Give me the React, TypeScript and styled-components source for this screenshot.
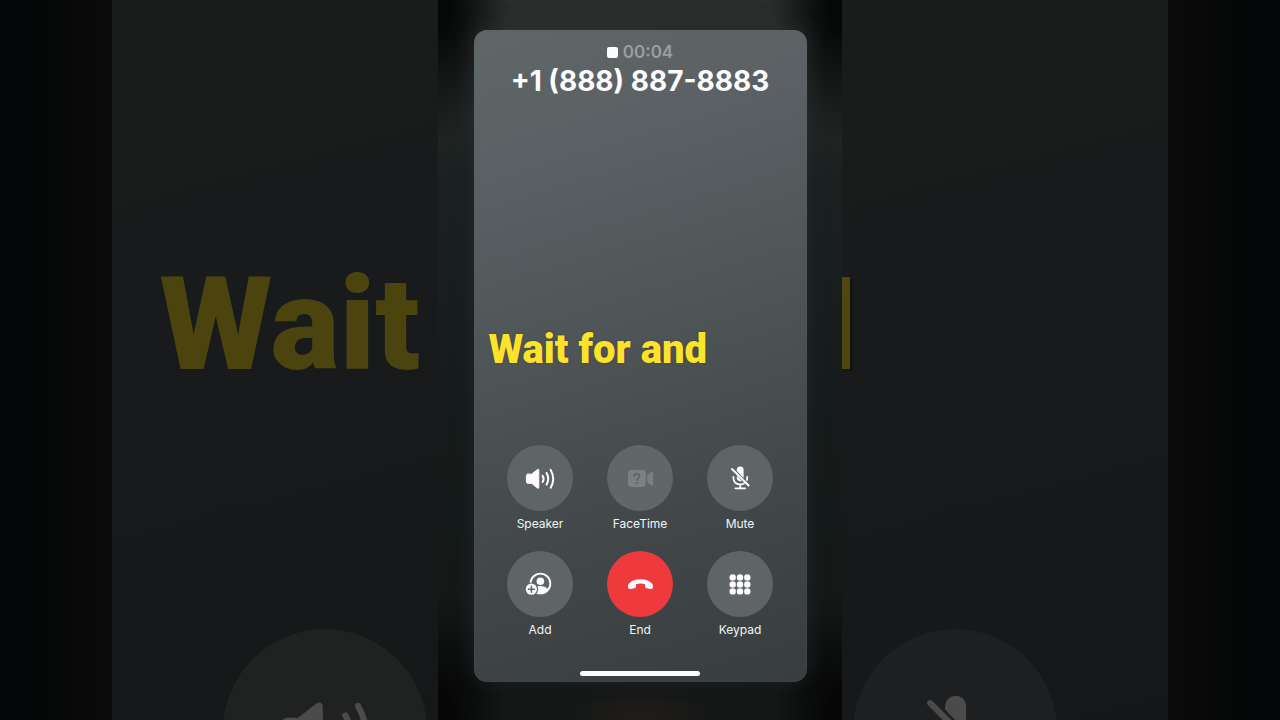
import React from "react";
import styled, { createGlobalStyle, css } from "styled-components";

const GlobalStyle = createGlobalStyle`
  *, *::before, *::after { box-sizing: border-box; }
  body { margin: 0; background: #070808; font-family: Inter, "Liberation Sans", sans-serif; }
`;

const Page = styled.div`
  display: grid;
  grid-template-columns: minmax(0, 1fr) 404px minmax(0, 1fr);
  height: 100vh;
  min-height: 720px;
  overflow: hidden;
`;

const Side = styled.div<{ $mirrored?: boolean }>`
  display: flex;
  flex-direction: ${(p) => (p.$mirrored ? "row-reverse" : "row")};
  min-width: 0;
  min-height: 0;
  overflow: hidden;
  background: linear-gradient(${(p) => (p.$mirrored ? "270deg" : "90deg")}, #050607 0, #060707 12%, #0a0b0a 25%);
`;

const Gutter = styled.div`
  flex: 0 0 112px;
`;

const Backdrop = styled.div<{ $align: "flex-start" | "flex-end" }>`
  flex: 1;
  min-width: 0;
  overflow: hidden;
  display: flex;
  flex-direction: column;
  justify-content: space-between;
  align-items: ${(p) => p.$align};
  background: linear-gradient(165deg, #1a1c1c 0%, #191a1b 45%, #151718 100%);
`;

const captionFont = css`
  font-family: Roboto, "Liberation Sans", sans-serif;
  font-weight: 900;
  white-space: nowrap;
`;

const BackdropWord = styled.div`
  ${captionFont}
  margin: 253px 18px 0 0;
  font-size: 130px;
  line-height: 144px;
  color: #4c440f;
`;

const BackdropStem = styled.div`
  width: 8px;
  height: 92px;
  margin-top: 277px;
  background: #4f4710;
  box-shadow: 2px 1px 2px #15120a;
`;

const BackdropKey = styled.div<{ $tone: string }>`
  flex: none;
  width: 204px;
  height: 204px;
  margin: 0 11px -113px;
  border-radius: 50%;
  background: ${(p) => p.$tone};
  color: #4b4b4c;
  svg { display: block; width: 100%; height: 100%; }
`;

const Stage = styled.main`
  display: flex;
  justify-content: center;
  padding: 30px 0 38px;
  overflow: hidden;
  background:
    radial-gradient(ellipse 70px 36px at 50% 100%, #241c19 0%, rgba(36, 28, 25, 0) 100%),
    radial-gradient(ellipse 70px 140px at 0% 0%, #060707 20%, rgba(6, 7, 7, 0) 100%),
    radial-gradient(ellipse 70px 140px at 100% 0%, #060707 20%, rgba(6, 7, 7, 0) 100%),
    radial-gradient(ellipse 70px 130px at 0% 100%, #060606 20%, rgba(6, 6, 6, 0) 100%),
    radial-gradient(ellipse 70px 130px at 100% 100%, #060606 20%, rgba(6, 6, 6, 0) 100%),
    linear-gradient(180deg, #292e2d 0%, #1b2020 25%, #151b1a 60%, #141817 100%);
`;

const Phone = styled.section`
  display: flex;
  flex-direction: column;
  align-items: center;
  width: 333px;
  padding: 12px 0 6px;
  border-radius: 13px;
  color: #fcfcfd;
  background: linear-gradient(163deg, #5f6766 0%, #5b6064 20%, #4d5255 50%, #42484a 72%, #383d40 100%);
  box-shadow: 0 -4px 20px rgba(50, 55, 55, 0.4), inset 0 0 1px 1px rgba(100, 110, 110, 0.15);
`;

const Timer = styled.div`
  display: flex;
  align-items: center;
  gap: 5px;
  font-size: 17px;
  font-weight: 600;
  line-height: 20px;
  color: #9a9fa1;
`;

const RecordMark = styled.span`
  width: 11px;
  height: 11px;
  border-radius: 2px;
  background: #fbfafd;
`;

const PhoneNumber = styled.h1`
  margin: 0;
  font-size: 28px;
  font-weight: 650;
  line-height: 38px;
  white-space: nowrap;
`;

const Caption = styled.p`
  ${captionFont}
  align-self: flex-start;
  margin: auto 0 71px 15px;
  font-size: 40px;
  line-height: 48px;
  color: #fbe32b;
  text-shadow: 0 0 2px rgba(50, 50, 35, 0.6);
`;

const Controls = styled.div`
  display: grid;
  grid-template-columns: repeat(3, 66px);
  gap: 19px 34px;
`;

const Control = styled.button<{ $kind?: "end" | "dim" }>`
  display: flex;
  flex-direction: column;
  align-items: center;
  gap: 5px;
  padding: 0;
  border: 0;
  background: none;
  font-family: inherit;
  font-size: 12px;
  line-height: 16px;
  color: #f3f5f5;

  svg {
    display: block;
    width: 66px;
    height: 66px;
    border-radius: 50%;
    color: ${(p) => (p.$kind === "dim" ? "#7b8081" : "#fcfbfd")};
    background: ${(p) => (p.$kind === "end" ? "#ee3a3d" : p.$kind === "dim" ? "#616768" : "#5f6467")};
  }
`;

const HomeBar = styled.div`
  width: 120px;
  height: 5px;
  margin-top: 33px;
  border-radius: 3px;
  background: #fcfbfd;
`;

const SpeakerIcon = () => (
  <svg viewBox="0 0 66 66" fill="none" stroke="currentColor" strokeLinecap="round" aria-hidden="true">
    <path fill="currentColor" strokeWidth="1" strokeLinejoin="round" d="M21 29.200h3.500l6-4.700c.6-.5 1.300-.2 1.300.6v17.400c0 .8-.7 1.100-1.300.6l-6-4.800H21c-1 0-1.600-.6-1.600-1.600v-5.900c0-1 .6-1.600 1.600-1.600z" />
    <path strokeWidth="2" d="M35.600 30.700q1.900 3.100 0 6.200M39.600 28q3.200 5.800 0 11.600M43.700 24.900q5 8.900 0 17.800" />
  </svg>
);

const VideoIcon = () => (
  <svg viewBox="0 0 66 66" aria-hidden="true">
    <rect x="21" y="25" width="17.800" height="17" rx="3.400" fill="currentColor" />
    <path fill="currentColor" d="M40.300 30.400l3.600-3.200c1.200-1 2.200-.4 2.200.9v11.100c0 1.300-1 1.900-2.200.9l-3.600-3.200z" />
    <path fill="none" stroke="#5a6061" strokeWidth="1.500" strokeLinecap="round" d="M27.300 31.300c.2-3.400 5.300-3.300 5.300-.3 0 1.900-2.600 2.100-2.600 4" />
    <circle cx="30" cy="37.900" r="1" fill="#5a6061" />
  </svg>
);

const MutedMicIcon = () => (
  <svg viewBox="0 0 66 66" fill="none" stroke="currentColor" strokeWidth="1.800" strokeLinecap="round" aria-hidden="true">
    <path fill="currentColor" stroke="none" d="M29.800 26.100V25a3.400 3.400 0 0 1 6.800 0v8z" />
    <path fill="currentColor" stroke="none" d="M29.800 30.700l5.200 5.300c-2.600 1-5.200-.6-5.200-3z" />
    <path d="M26.400 31.800v1.300c0 3.900 3 6.300 6.800 6.300 1.400 0 2.700-.3 3.800-1M40.200 31.800v1.300c0 .7-.1 1.300-.3 1.900M33.300 39.500v3.600M28.400 43.300h9.800" />
    <path strokeWidth="2" d="M25 24l16.600 16.500" />
  </svg>
);

const AddPersonIcon = () => (
  <svg viewBox="0 0 66 66" aria-hidden="true">
    <circle cx="33.400" cy="32.500" r="9.900" fill="none" stroke="currentColor" strokeWidth="1.900" />
    <circle cx="33.400" cy="30.300" r="3.800" fill="currentColor" />
    <path fill="currentColor" d="M26 38.200c1.600-2.200 4.300-3.100 7.400-3.100s5.800.9 7.400 3.100c-1.700 2.400-4.400 3.900-7.400 3.900S27.700 40.600 26 38.200z" />
    <circle cx="24.400" cy="38.200" r="6.700" fill="#5f6467" />
    <circle cx="24.400" cy="38.200" r="5.600" fill="currentColor" />
    <path stroke="#5f6467" strokeWidth="1.500" strokeLinecap="round" d="M24.400 35.200v6M21.400 38.200h6" />
  </svg>
);

const HangUpIcon = () => (
  <svg viewBox="0 0 66 66" aria-hidden="true">
    <path fill="currentColor" d="M33.500 28.200c5 0 9.300 1.500 11.500 4.200 1 1.300 1.200 2.700.8 4.100-.3 1.200-1.200 1.700-2.400 1.500l-3.700-.7c-1-.2-1.500-.7-1.600-1.700l-.1-1.700c0-.5-.3-.8-.7-.9-2.400-.7-5.200-.7-7.600 0-.4.100-.7.400-.7.900l-.1 1.700c-.1 1-.6 1.500-1.600 1.700l-3.700.7c-1.200.2-2.100-.3-2.400-1.500-.4-1.400-.2-2.800.8-4.100 2.200-2.700 6.500-4.200 11.500-4.200z" />
  </svg>
);

const KeypadIcon = () => (
  <svg viewBox="0 0 66 66" fill="currentColor" aria-hidden="true">
    {[26.4, 33.4, 40.4].map((cy) =>
      [25.7, 33, 40.3].map((cx) => <circle key={`${cx}-${cy}`} cx={cx} cy={cy} r="3.200" />)
    )}
  </svg>
);

const controls: { label: string; icon: React.FC; kind?: "end" | "dim" }[] = [
  { label: "Speaker", icon: SpeakerIcon },
  { label: "FaceTime", icon: VideoIcon, kind: "dim" },
  { label: "Mute", icon: MutedMicIcon },
  { label: "Add", icon: AddPersonIcon },
  { label: "End", icon: HangUpIcon, kind: "end" },
  { label: "Keypad", icon: KeypadIcon },
];

export default function App() {
  return (
    <>
      <GlobalStyle />
      <Page>
        <Side aria-hidden="true">
          <Gutter />
          <Backdrop $align="flex-end">
            <BackdropWord>Wait</BackdropWord>
            <BackdropKey $tone="#202221"><SpeakerIcon /></BackdropKey>
          </Backdrop>
        </Side>
        <Stage>
          <Phone>
            <Timer><RecordMark />00:04</Timer>
            <PhoneNumber>+1 (888) 887-8883</PhoneNumber>
            <Caption>Wait for and</Caption>
            <Controls>
              {controls.map(({ label, icon: Icon, kind }) => (
                <Control key={label} type="button" $kind={kind}>
                  <Icon />
                  {label}
                </Control>
              ))}
            </Controls>
            <HomeBar />
          </Phone>
        </Stage>
        <Side $mirrored aria-hidden="true">
          <Gutter />
          <Backdrop $align="flex-start">
            <BackdropStem />
            <BackdropKey $tone="#1e1f21"><MutedMicIcon /></BackdropKey>
          </Backdrop>
        </Side>
      </Page>
    </>
  );
}
